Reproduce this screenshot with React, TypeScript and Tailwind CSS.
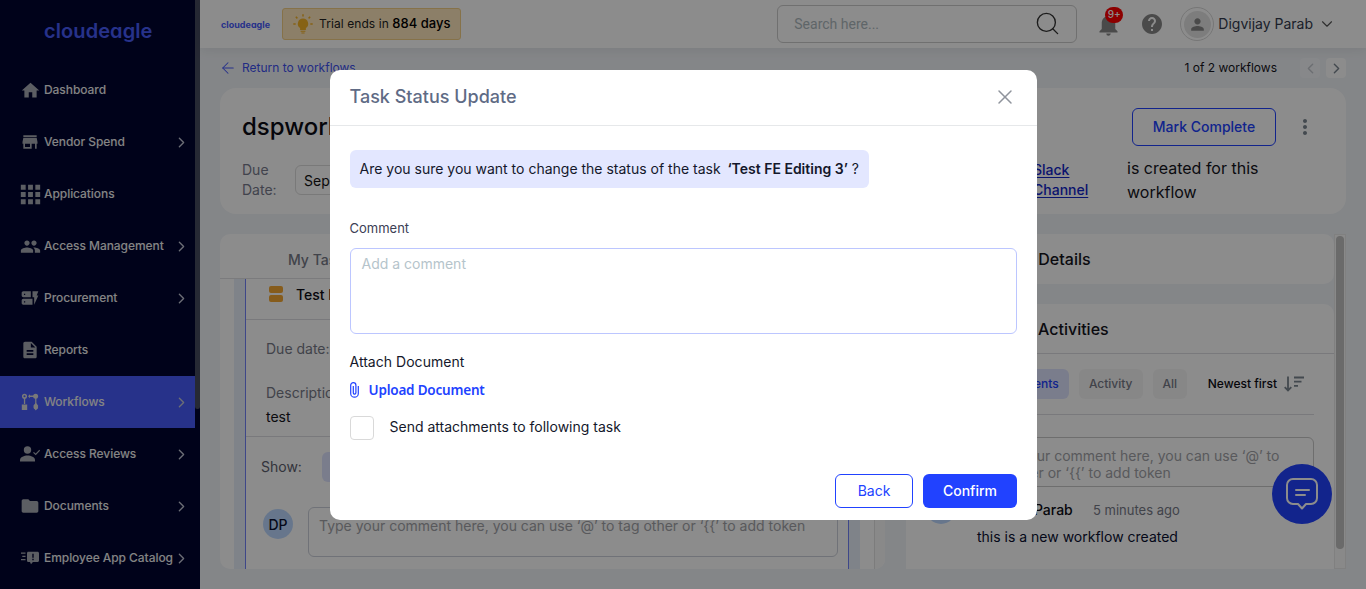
import type { ReactNode } from "react";
import { ArrowLeft, ChevronDown, ChevronLeft, ChevronRight, Search, X } from "lucide-react";
import {
  MdApps,
  MdDescription,
  MdDynamicForm,
  MdFolder,
  MdHelp,
  MdHome,
  MdMoreVert,
  MdNotifications,
  MdPeople,
  MdPerson,
  MdStore,
} from "react-icons/md";

const WorkflowIcon = () => (
  <svg width="18" height="18" viewBox="0 0 18 18" fill="currentColor">
    <circle cx="3.5" cy="3.2" r="1.8" fill="none" stroke="currentColor" strokeWidth="1.5" />
    <path d="M2.9 5h1.3v6H2.9zM.8 11.5h5.4V17H.8zM8 2.6h5v1.3H8zM14.2 5h1.2v6h-1.2z" />
    <path d="M8 1.2v4L6 3.2z" transform="translate(1 0)" />
    <circle cx="14.6" cy="3.2" r="2.5" />
    <circle cx="14.8" cy="14" r="2.4" />
    <path d="M14.8 17.6l-2-2.6h4zM12.3 12.8l2.5-3 2.5 3z" />
  </svg>
);

const ReviewIcon = () => (
  <svg width="20" height="18" viewBox="0 0 20 18" fill="currentColor">
    <circle cx="7.5" cy="5" r="3.7" />
    <path d="M0 16.5v-1.6C0 12 4.2 10.4 7.5 10.4S15 12 15 14.9v1.6z" />
    <path d="M13.5 7.3l2.2 2.2 4-4.3" fill="none" stroke="currentColor" strokeWidth="1.2" />
  </svg>
);

const CatalogIcon = () => (
  <svg width="18" height="14" viewBox="0 0 18 14" fill="currentColor">
    <path d="M0 1.5h4.5v1.3H0zM1.3 4.7h3.2V6H1.3zM0 7.9h4.5v1.3H0z" />
    <path
      fillRule="evenodd"
      d="M7.2.8h9.3c.9 0 1.5.6 1.5 1.5v7.2c0 .9-.6 1.5-1.5 1.5h-4.6L10 13.2 9 11H7.2c-.7 0-1.2-.6-1.2-1.5V2.3C6 1.4 6.5.8 7.2.8zM11.3 2.8v4h1.4v-4zm0 5v1.4h1.4V7.8z"
    />
  </svg>
);

type NavItem = { label: string; icon: ReactNode; arrow?: boolean; active?: boolean };

const navItems: NavItem[] = [
  { label: "Dashboard", icon: <MdHome size={21} /> },
  { label: "Vendor Spend", icon: <MdStore size={20} />, arrow: true },
  { label: "Applications", icon: <MdApps size={29} /> },
  { label: "Access Management", icon: <MdPeople size={21} />, arrow: true },
  { label: "Procurement", icon: <MdDynamicForm size={20} />, arrow: true },
  { label: "Reports", icon: <MdDescription size={20} /> },
  { label: "Workflows", icon: <WorkflowIcon />, arrow: true, active: true },
  { label: "Access Reviews", icon: <ReviewIcon />, arrow: true },
  { label: "Documents", icon: <MdFolder size={20} />, arrow: true },
  { label: "Employee App Catalog", icon: <CatalogIcon />, arrow: true },
];

function Sidebar() {
  return (
    <aside className="flex w-[200px] shrink-0 bg-[#000531]">
      <nav className="w-[195px]">
        <div className="h-16 pl-[44px] pt-[17px] text-[20px] font-semibold leading-7 tracking-[0.08px] text-[#475bfb] [font-feature-settings:'cv11']">
          cloudeagle
        </div>
        {navItems.map((item) => (
          <div
            key={item.label}
            className={`flex h-[52px] items-center pr-[5px] ${item.active ? "bg-[#475bfb]" : ""}`}
          >
            <span
              className={`flex w-5 shrink-0 items-center justify-center ml-[20px] [&>svg]:shrink-0 ${item.active ? "text-[#ddd]" : "text-[#a8acb4]"}`}
            >
              {item.icon}
            </span>
            <span className="ml-1 whitespace-nowrap text-[12px] font-medium tracking-[-0.06px] text-[#f0f0f0]">
              {item.label}
            </span>
            {item.arrow && (
              <ChevronRight className="ml-auto shrink-0 text-[#c4c8d6]" size={17} strokeWidth={1.9} />
            )}
          </div>
        ))}
      </nav>
      <div className="h-[409px] w-[5px] rounded-b bg-[#464b60]" />
    </aside>
  );
}

function BulbIcon() {
  return (
    <svg width="20" height="20" viewBox="0 0 20 20" fill="#f5b226">
      <path d="M10 4.6a5.2 5.2 0 0 0-2.9 9.5V16h5.8v-1.9A5.2 5.2 0 0 0 10 4.6zM7.6 16.8h4.8v1H7.6zM8.4 18.4h3.2v1H8.4z" />
      <path d="M10 .3v2.2M2.8 2.8l1.6 1.6M17.2 2.8l-1.6 1.6M.3 10h2.4M17.3 10h2.4" stroke="#f5b226" strokeWidth="1.5" />
    </svg>
  );
}

function Header() {
  return (
    <header className="flex h-12 shrink-0 items-center bg-white pr-[29px] shadow-[0_2px_12px_rgba(0,0,0,0.08)]">
      <span className="ml-[21px] w-[61px] pt-[2px] text-[9px] font-bold text-[#475bfb] [font-feature-settings:'cv11']">
        cloudeagle
      </span>
      <div className="flex h-8 w-[179px] items-center rounded-[3px] border border-[#f5cf85] bg-[#ffe8bd] pl-[10px] text-[12px] text-[#222]">
        <BulbIcon />
        <span className="ml-[6px] whitespace-nowrap tracking-[0.08px]">
          Trial ends in <span className="text-[13px] font-medium tracking-normal text-black">884 days</span>
        </span>
      </div>
      <div className="ml-auto flex h-[38px] w-[300px] items-center justify-between rounded-[6px] border border-[#ccc] pl-4 pr-[15px]">
        <span className="font-['Roboto'] text-[14px] text-[#aeb9be]">Search here...</span>
        <Search size={27} strokeWidth={1.2} className="-mt-px text-[#333]" />
      </div>
      <div className="relative ml-[19px] flex w-6 justify-center text-[#888]">
        <MdNotifications size={27} className="shrink-0" />
        <span className="absolute -top-[4px] left-[9px] flex h-4 w-[18px] items-center justify-center rounded-full bg-[#ff0000] text-[10px] font-medium text-white">
          9+
        </span>
      </div>
      <MdHelp size={24} className="ml-5 text-[#888]" />
      <div className="ml-4 flex size-[34px] items-center justify-center rounded-full border border-[#d8d8d8]">
        <div className="flex size-[27px] items-center justify-center rounded-full bg-[#e4e4e4] text-[#888]">
          <MdPerson size={19} />
        </div>
      </div>
      <span className="ml-1 whitespace-nowrap pb-px text-[14px] text-[#333a4d]">Digvijay Parab</span>
      <ChevronDown size={18} strokeWidth={1.5} className="ml-[5px] mr-px text-[#555]" />
    </header>
  );
}

function SummaryCard() {
  return (
    <section className="flex h-[126px] shrink-0 justify-between rounded-2xl bg-white pl-[22px] pr-[33px]">
      <div className="pt-[21px]">
        <h1 className="text-[24px] font-medium leading-9 text-[#0c0c14]">dspworkflow</h1>
        <div className="mt-[15px] flex items-center text-[14px]">
          <div className="w-[53px] leading-5 text-[#777a8c]">
            Due
            <br />
            Date:
          </div>
          <div className="flex h-[30px] w-32 items-center rounded-md border border-[#ddd] pl-[8px] text-[#111]">
            Sep 27, 2024
          </div>
        </div>
      </div>
      <div className="flex w-[280px] flex-col pt-5">
        <div className="flex items-center justify-end">
          <button className="h-[38px] w-36 rounded-md border border-[#2142ff] pb-px text-[14px] font-medium text-[#2142ff]">
            Mark Complete
          </button>
          <MdMoreVert size={24} className="-mr-[4px] ml-[17px] text-[#7b8690]" />
        </div>
        <div className="mt-[10px] flex">
          <a className="w-[94px] pt-[4px] text-[14px] font-medium leading-5 text-[#1226c8] underline underline-offset-2">
            Slack
            <br />
            Channel
          </a>
          <p className="w-[150px] whitespace-nowrap text-[16px] leading-6 text-[#14141c]">
            is created for this
            <br />
            workflow
          </p>
        </div>
      </div>
    </section>
  );
}

function TaskPanel() {
  return (
    <section className="flex h-[335px] w-[665px] flex-col overflow-hidden rounded-[10px] bg-white">
      <div className="flex h-[45px] shrink-0 items-center border-b border-[#e0e0e4] pl-[68px] pt-[7px] text-[14px] font-medium text-[#777a88]">
        My Tasks
      </div>
      <div className="flex grow">
        <div className="ml-[14px] w-[11px] bg-[#e7eefa]" />
        <div className="flex w-[604px] flex-col border-x border-[#7282fa]">
          <div className="flex h-[41px] items-center border-b border-[#dcdce2] pb-[10px] pl-[23px]">
            <div className="flex flex-col gap-[2px]">
              <div className="h-[7px] w-[14px] rounded-[2px] bg-[#f5a833]" />
              <div className="h-[7px] w-[14px] rounded-[2px] bg-[#f5a833]" />
            </div>
            <span className="ml-[13px] text-[14px] font-medium text-[#0c0c14]">Test FE Editing 3</span>
          </div>
          <div className="flex h-[117px] flex-col border-b border-[#dcdce2] pl-5 pt-[19px] text-[14px] leading-5 text-[#777a88]">
            <span>Due date:</span>
            <span className="mt-6">Description:</span>
            <span className="mt-[4px] text-[#14141c]">test</span>
          </div>
          <div className="flex h-[60px] items-center pl-[15px] text-[14px] text-[#5d606e]">
            <span className="-mt-px">Show:</span>
            <span className="ml-[20px] h-[30px] w-[100px] rounded-md bg-[#dfe3ff]" />
          </div>
          <div className="flex pl-[17px] pt-[10px]">
            <div className="mt-[2px] flex size-[30px] items-center justify-center rounded-full bg-[#bcd8ff] text-[14px] font-medium text-[#0a1030]">
              DP
            </div>
            <div className="ml-[15px] h-[50px] w-[530px] rounded-md border border-[#ccd0da] pl-[10px] pt-[8px] text-[14px] leading-5 text-[#a2a3a8]">
              Type your comment here, you can use ‘@’ to tag other or ‘{"{{"}’ to add token
            </div>
          </div>
        </div>
        <div className="w-[11px] bg-[#e7eefa]" />
        <div className="ml-[14px] grow border-l border-[#e2e2e2] bg-[#fafafa]" />
      </div>
    </section>
  );
}

function ActivityColumn() {
  return (
    <section className="ml-[21px] flex h-[335px] grow">
      <div className="flex grow flex-col">
        <div className="flex h-[50px] shrink-0 items-center rounded-[10px] bg-white pl-[55px] text-[16px] font-medium text-[#14141c]">
          Workflow Details
        </div>
        <div className="mt-5 flex grow flex-col rounded-t-[10px] bg-white">
          <div className="flex h-[50px] items-center border-b border-[#dcdce2] pl-[132px] text-[16px] font-medium text-[#14141c]">
            Activities
          </div>
          <div className="mx-5 flex h-[61px] items-center justify-end gap-[10px] border-b border-[#dcdce2] pr-[10px] text-[12px] font-medium">
            <span className="flex h-[30px] items-center rounded-md bg-[#dfe3ff] px-[10px] text-[#2142ff]">Comments</span>
            <span className="flex h-[30px] w-16 items-center justify-center rounded-md bg-[#f6f6f6] text-[#777a88]">
              Activity
            </span>
            <span className="flex h-[30px] w-[34px] items-center justify-center rounded-md bg-[#f6f6f6] text-[#777a88]">
              All
            </span>
            <span className="ml-[11px] whitespace-nowrap text-[#0c0c14]">Newest first</span>
            <svg width="20" height="16" viewBox="0 0 20 16" className="-ml-[3px]" fill="none" stroke="#7b8690" strokeWidth="1.8">
              <path d="M4 .5v14M.7 11.2L4 14.5l3.3-3.3M10 1.5h10M10 5.7h7.5M10 9.9h4" />
            </svg>
          </div>
          <div className="ml-[66px] mr-5 mt-[22px] h-[50px] shrink-0 rounded-md border border-[#c8c8c8] pl-[11px] pt-[9px] text-[14px] leading-[17px] text-[#a2a3a8]">
            <div className="-mr-8 whitespace-nowrap">Type your comment here, you can use ‘@’ to</div>
            <div className="whitespace-nowrap">tag other or ‘{"{{"}’ to add token</div>
          </div>
          <div className="flex pl-5 pt-[7px]">
            <div className="size-[30px] rounded-full bg-[#bcd8ff]" />
            <div className="ml-[21px] text-[14px]">
              <div className="mt-[6px] flex leading-5">
                <span className="w-[116px] whitespace-nowrap font-medium text-[#0c0c14]">Digvijay Parab</span>
                <span className="whitespace-nowrap text-[13px] text-[#777a88]">5 minutes ago</span>
              </div>
              <div className="mt-[7px] whitespace-nowrap leading-5 text-[#0a1030]">this is a new workflow created</div>
            </div>
          </div>
        </div>
      </div>
      <div className="w-3 border border-[#eaeaea] bg-[#fafafa] px-px pt-px">
        <div className="h-[313px] w-2 rounded bg-[#c1c1c1]" />
      </div>
    </section>
  );
}

function Modal() {
  return (
    <div className="flex h-[450px] w-[707px] flex-col rounded-[10px] bg-white">
      <div className="flex h-14 items-center justify-between border-b border-[#e6e8ea] px-5 pb-[2px]">
        <h2 className="text-[18px] font-medium text-[#5f6b85]">Task Status Update</h2>
        <X size={24} strokeWidth={1.5} className="text-[#8f949c]" />
      </div>
      <div className="flex flex-col items-start px-5 pt-6">
        <div className="flex h-[38px] w-[519px] items-center whitespace-pre rounded-md bg-[#e3e7ff] pb-px pl-[10px] text-[14px] text-[#14182b]">
          {"Are you sure you want to change the status of the task  "}
          <span className="-ml-px font-semibold">‘Test FE Editing 3’</span>
          {" ?"}
        </div>
        <label className="mt-[30px] text-[13px] leading-5 text-[#3c4055]">Comment</label>
        <div className="mt-[10px] h-[86px] w-full rounded-md border border-[#bcc6ff] px-[11px] pt-[5px] text-[14px] leading-5 text-[#b5c4cb]">
          Add a comment
        </div>
        <div className="mt-[18px] text-[14px] leading-5 tracking-[0.03px] text-[#14182b]">Attach Document</div>
        <div className="mt-[8px] flex items-center text-[#2142ff]">
          <svg width="9" height="16" viewBox="0 0 9 16" fill="none" stroke="currentColor" strokeWidth="1.2">
            <path d="M8.3 4v7.4a3.8 3.8 0 0 1-7.6 0V3.3a2.6 2.6 0 0 1 5.2 0v7.5a1.3 1.3 0 0 1-2.6 0V4" />
          </svg>
          <span className="ml-[10px] font-['Noto_Sans'] text-[13.5px] font-semibold leading-5 tracking-[-0.2px]">
            Upload Document
          </span>
        </div>
        <div className="mt-[16px] flex items-center">
          <span className="size-[24px] rounded-[4px] border border-[#d9d9d9]" />
          <span className="-mt-[2px] ml-4 text-[14px] leading-5 text-[#14182b]">Send attachments to following task</span>
        </div>
        <div className="mt-[34px] flex gap-[10px] self-end text-[14px]">
          <button className="h-[34px] w-[78px] rounded-md border border-[#2142ff] pb-px pl-px text-[#2142ff]">Back</button>
          <button className="h-[34px] w-[94px] rounded-md bg-[#2142ff] pb-[2px] pl-px font-medium text-white">Confirm</button>
        </div>
      </div>
    </div>
  );
}

export default function App() {
  return (
    <div className="relative flex h-[589px] w-[1366px] overflow-hidden bg-[#f1f4f8] font-['Inter',sans-serif]">
      <Sidebar />
      <main className="flex grow flex-col">
        <Header />
        <div className="flex grow flex-col px-5">
          <div className="flex h-10 shrink-0 items-center text-[12px]">
            <ArrowLeft size={18} strokeWidth={1.4} className="-ml-px text-[#475bfb]" />
            <span className="ml-[5px] text-[#3d50f0]">Return to workflows</span>
            <span className="ml-auto mr-[23px] text-[#14141c]">1 of 2 workflows</span>
            <span className="flex size-5 items-center justify-center rounded bg-[#f6f8fb] text-[#c5c9d0]">
              <ChevronLeft size={17} />
            </span>
            <span className="ml-[6px] flex size-5 items-center justify-center rounded bg-white text-[#7b8690]">
              <ChevronRight size={17} />
            </span>
          </div>
          <SummaryCard />
          <div className="mt-5 flex">
            <TaskPanel />
            <ActivityColumn />
          </div>
        </div>
      </main>
      <div className="absolute bottom-[65px] right-[34px] flex size-[60px] items-center justify-center rounded-full bg-[#2142ff]">
        <svg width="32" height="32" viewBox="0 0 32 32" fill="none" stroke="#fff" strokeWidth="2" strokeLinecap="round" strokeLinejoin="round">
          <path d="M7 1h18a6 6 0 0 1 6 6v13a6 6 0 0 1-6 6h-5l-4 4.5L12 26H7a6 6 0 0 1-6-6V7a6 6 0 0 1 6-6zM10 12h13M10 17h9" />
        </svg>
      </div>
      <div className="absolute inset-0 flex items-start justify-center bg-black/45 pt-[70px]">
        <Modal />
      </div>
    </div>
  );
}
